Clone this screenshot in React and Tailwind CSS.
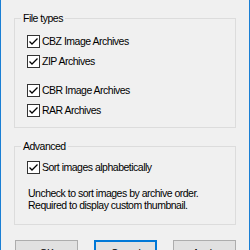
import React from 'react';

const Check = ({ label }) => (
  <div className="flex items-center h-4">
    <span className="w-[13px] h-[13px] border border-[#333333] bg-white flex items-center justify-center">
      <svg width="11" height="11" viewBox="0 0 11 11">
        <path d="M1.5 5.5 L4 8 L9.5 2.5" fill="none" stroke="#000" strokeWidth="1.3" />
      </svg>
    </span>
    <span className="ml-[2px] whitespace-nowrap">{label}</span>
  </div>
);

const App = () => {
  return (
    <div
      className="w-[250px] h-[250px] overflow-hidden bg-[#f0f0f0] border-x border-[#1a7fd4] text-[10.5px] tracking-[-0.5px] leading-4 text-black"
      style={{ fontFamily: '"Liberation Sans", Arial, sans-serif' }}
    >
      <fieldset className="mt-[10px] ml-[13px] w-[222px] border border-[#dcdcdc] pl-[12px] pb-[9px]">
        <legend className="px-[2px] -ml-[6px]">File types</legend>
        <div className="pt-[7px] flex flex-col gap-[4px]">
          <Check label="CBZ Image Archives" />
          <Check label="ZIP Archives" />
          <div className="h-[5px]" />
          <Check label="CBR Image Archives" />
          <Check label="RAR Archives" />
        </div>
      </fieldset>

      <fieldset className="mt-[10px] ml-[13px] w-[222px] border border-[#dcdcdc] pl-[12px] pb-[13px]">
        <legend className="px-[2px] -ml-[6px]">Advanced</legend>
        <div className="pt-[5px]">
          <Check label="Sort images alphabetically" />
          <div className="mt-[12px] ml-[1px] leading-[12px] whitespace-nowrap">
            <div>Uncheck to sort images by archive order.</div>
            <div>Required to display custom thumbnail.</div>
          </div>
        </div>
      </fieldset>

      <div className="mt-[15px] ml-[14px] flex gap-[16px]">
        <button className="w-[63px] h-[23px] bg-[#e1e1e1] border border-[#adadad] flex justify-center pt-[4px]">OK</button>
        <button className="w-[63px] h-[23px] bg-[#e1e1e1] border-2 border-[#0078d7] flex justify-center pt-[3px]">Cancel</button>
        <button className="w-[63px] h-[23px] bg-[#e1e1e1] border border-[#adadad] flex justify-center pt-[4px]">Apply</button>
      </div>
    </div>
  );
};

export default App;
